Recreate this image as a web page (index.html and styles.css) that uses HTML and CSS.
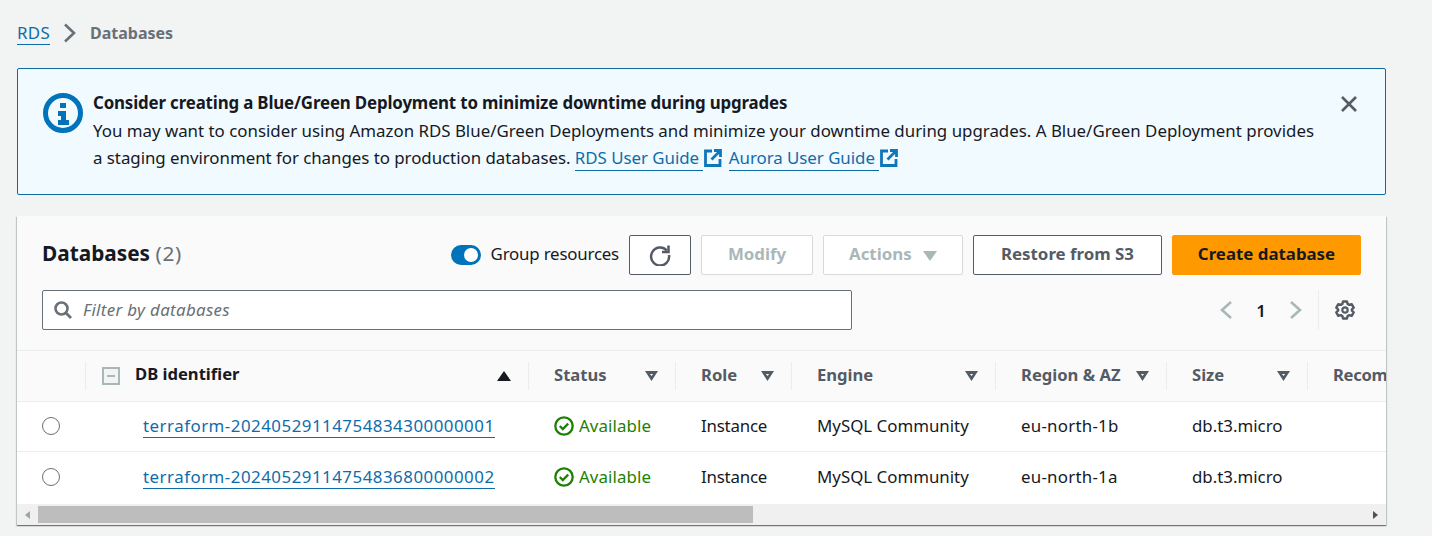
FILE: index.html
```html
<!DOCTYPE html>
<html lang="en">
<head>
<meta charset="UTF-8" />
<title>Databases</title>
<link rel="stylesheet" href="styles.css">
</head>
<body>

  <nav class="breadcrumb">
    <a href="#" class="crumb-link">RDS</a>
    <svg class="crumb-sep" width="16" height="20" viewBox="0 0 16 20"><path d="M3 1.500l9 8.500-9 8.500" fill="none" stroke="#687078" stroke-width="2.600"/></svg>
    <span class="crumb-current">Databases</span>
  </nav>

  <div class="alert">
    <svg class="alert-icon" width="40" height="40" viewBox="0 0 40 40">
      <circle cx="20" cy="20" r="17.500" fill="none" stroke="#0073bb" stroke-width="5"/>
      <path d="M17 10h6v5h-6zM15 18h8v9h3v5H15v-5h3v-4h-3z" fill="#0073bb"/>
    </svg>
    <div class="alert-body">
      <div class="alert-title">Consider creating a Blue/Green Deployment to minimize downtime during upgrades</div>
      <div>You may want to consider using Amazon RDS Blue/Green Deployments and minimize your downtime during upgrades. A Blue/Green Deployment provides</div>
      <div class="alert-links">a staging environment for changes to production databases. <a href="#" class="ext-link">RDS User Guide&nbsp;</a><svg class="ext-icon" width="18" height="18" viewBox="0 0 18 18"><path d="M8 2H1.500v14.500H16V10" fill="none" stroke="#0f76bb" stroke-width="2.800"/><path d="M10 1.500h6.500V8M16 2L7.500 10.500" fill="none" stroke="#0f76bb" stroke-width="2.800"/></svg> <a href="#" class="ext-link">Aurora User Guide&nbsp;</a><svg class="ext-icon" width="18" height="18" viewBox="0 0 18 18"><path d="M8 2H1.500v14.500H16V10" fill="none" stroke="#0f76bb" stroke-width="2.800"/><path d="M10 1.500h6.500V8M16 2L7.500 10.500" fill="none" stroke="#0f76bb" stroke-width="2.800"/></svg></div>
    </div>
    <svg class="alert-close" width="18" height="18" viewBox="0 0 18 18"><path d="M2 2l14 14M16 2L2 16" fill="none" stroke="#545b64" stroke-width="2.600"/></svg>
  </div>

  <section class="panel">
    <div class="panel-head">
      <div class="toolbar">
        <h1 class="panel-title">Databases <span class="count">(2)</span></h1>
        <div class="toggle"><span class="knob"></span></div>
        <span class="toggle-label">Group resources</span>
        <button class="btn btn-refresh">
          <svg width="22" height="22" viewBox="0 0 22 22"><path d="M17.800 6.500A9 9 0 1 0 20 11" fill="none" stroke="#545b64" stroke-width="2.500"/><path d="M19.500 1.500v6.500h-6.500" fill="none" stroke="#545b64" stroke-width="2.500"/></svg>
        </button>
        <button class="btn btn-disabled btn-modify">Modify</button>
        <button class="btn btn-disabled btn-actions">Actions <span class="caret-down"></span></button>
        <button class="btn btn-restore">Restore from S3</button>
        <button class="btn btn-primary">Create database</button>
      </div>
      <div class="filter-row">
        <div class="filter">
          <svg width="18" height="18" viewBox="0 0 18 18"><circle cx="7.500" cy="7.500" r="6" fill="none" stroke="#687078" stroke-width="2.600"/><path d="M11.800 11.800L17 17" stroke="#687078" stroke-width="2.800"/></svg>
          <span class="filter-text">Filter by databases</span>
        </div>
        <div class="pager">
          <svg width="14" height="20" viewBox="0 0 14 20"><path d="M12 2L3 10l9 8" fill="none" stroke="#aab7b8" stroke-width="2.600"/></svg>
          <span class="page-num">1</span>
          <svg width="14" height="20" viewBox="0 0 14 20"><path d="M2 2l9 8-9 8" fill="none" stroke="#aab7b8" stroke-width="2.600"/></svg>
        </div>
        <div class="settings">
          <svg width="20" height="20" viewBox="0 0 20 20"><path d="M8 1.500h4l.6 2.400 1.700 1 2.400-.7 2 3.400-1.800 1.700v1.400l1.800 1.700-2 3.400-2.400-.7-1.700 1-.6 2.400H8l-.6-2.400-1.700-1-2.400.7-2-3.400 1.800-1.700V9.300L1.300 7.600l2-3.400 2.400.7 1.700-1z" fill="none" stroke="#545b64" stroke-width="2.400" stroke-linejoin="round"/><circle cx="10" cy="10" r="2.700" fill="none" stroke="#545b64" stroke-width="2.200"/></svg>
        </div>
      </div>
    </div>

    <div class="table-wrap">
      <table class="db-table">
        <colgroup>
          <col class="c-radio"><col class="c-id"><col class="c-status"><col class="c-role"><col class="c-engine"><col class="c-region"><col class="c-size"><col class="c-rec">
        </colgroup>
        <thead>
          <tr>
            <th></th>
            <th class="th-id">
              <div class="th-inner th-active">
                <span class="expand-box"><span></span></span>
                <span class="th-name">DB identifier</span>
                <span class="sort-up"></span>
              </div>
            </th>
            <th><div class="th-inner"><span class="th-name">Status</span><span class="sort-down"></span></div></th>
            <th><div class="th-inner"><span class="th-name">Role</span><span class="sort-down"></span></div></th>
            <th><div class="th-inner"><span class="th-name">Engine</span><span class="sort-down"></span></div></th>
            <th><div class="th-inner"><span class="th-name">Region &amp; AZ</span><span class="sort-down"></span></div></th>
            <th><div class="th-inner"><span class="th-name">Size</span><span class="sort-down"></span></div></th>
            <th><div class="th-inner"><span class="th-name th-last">Recom</span></div></th>
          </tr>
        </thead>
        <tbody>
          <tr>
            <td class="td-radio"><span class="radio"></span></td>
            <td class="td-id"><a href="#" class="db-link">terraform-20240529114754834300000001</a></td>
            <td><span class="status"><svg width="20" height="20" viewBox="0 0 20 20"><circle cx="10" cy="10" r="8.700" fill="none" stroke="#1d8102" stroke-width="2.300"/><path d="M5.800 10l3 3 5.400-5.400" fill="none" stroke="#1d8102" stroke-width="2.300"/></svg>Available</span></td>
            <td class="td-role">Instance</td>
            <td>MySQL Community</td>
            <td class="td-region">eu-north-1b</td>
            <td>db.t3.micro</td>
            <td></td>
          </tr>
          <tr>
            <td class="td-radio"><span class="radio"></span></td>
            <td class="td-id"><a href="#" class="db-link">terraform-20240529114754836800000002</a></td>
            <td><span class="status"><svg width="20" height="20" viewBox="0 0 20 20"><circle cx="10" cy="10" r="8.700" fill="none" stroke="#1d8102" stroke-width="2.300"/><path d="M5.800 10l3 3 5.400-5.400" fill="none" stroke="#1d8102" stroke-width="2.300"/></svg>Available</span></td>
            <td class="td-role">Instance</td>
            <td>MySQL Community</td>
            <td class="td-region">eu-north-1a</td>
            <td>db.t3.micro</td>
            <td></td>
          </tr>
        </tbody>
      </table>
    </div>

    <div class="scrollbar">
      <span class="arrow-left"></span>
      <span class="thumb"></span>
      <span class="arrow-right"></span>
    </div>
  </section>

</body>
</html>
```

FILE: styles.css
```css
html, body {
  margin: 0;
  padding: 0;
  height: 100%;
  overflow: hidden;
  background: #f2f3f3;
  font-family: 'Noto Sans', 'Open Sans', sans-serif;
  font-size: 16.88px;
  color: #16191f;
}

a {
  color: #0f6cab;
  text-decoration: none;
  border-bottom: 1px solid #0f6cab;
}

.breadcrumb {
  display: flex;
  align-items: center;
  height: 24px;
  margin: 21px 0 23px 17px;
}

.crumb-link {
  letter-spacing: 0.3px;
}

.crumb-sep {
  margin: 0 12px 0 12px;
}

.crumb-current {
  font-size: 16px;
  font-weight: 700;
  color: #687078;
}

.alert {
  display: flex;
  align-items: flex-start;
  box-sizing: border-box;
  width: 1369px;
  height: 127px;
  margin-left: 17px;
  padding: 24px 27px 0 25px;
  background: #f1faff;
  border: 1px solid #0f6a9e;
  border-radius: 2px;
  line-height: 27px;
}

.alert-icon {
  flex: none;
  margin-right: 10px;
}

.alert-body {
  flex: 1;
  margin-top: -4px;
}

.alert-title {
  font-weight: 700;
  letter-spacing: -0.15px;
  margin-bottom: 1px;
}

.alert-links {
  letter-spacing: -0.03px;
}

.alert-close {
  flex: none;
  margin-top: 2px;
}

.ext-link {
  padding-bottom: 1px;
}

.ext-icon {
  vertical-align: -3px;
  margin: 0 2px 0 1px;
}

.panel {
  box-sizing: border-box;
  width: 1369px;
  height: 309px;
  margin: 21px 0 0 17px;
  background: #fff;
  box-shadow: 0 1px 1px 0 rgba(0,28,36,0.4), 1px 1px 1px 0 rgba(0,28,36,0.15), -1px 1px 1px 0 rgba(0,28,36,0.15);
  overflow: hidden;
}

.panel-head {
  box-sizing: border-box;
  height: 135px;
  padding: 19px 25px 0 25px;
  background: #fafafa;
  border-bottom: 1px solid #eaeded;
}

.toolbar {
  display: flex;
  align-items: center;
  height: 40px;
}

.panel-title {
  flex: 1;
  margin: -4px 0 0 0;
  font-size: 20.8px;
  font-weight: 700;
}

.count {
  font-weight: 400;
  color: #687078;
  letter-spacing: 0.7px;
}

.toggle {
  position: relative;
  width: 30px;
  height: 20px;
  margin-right: 10px;
  background: #0073bb;
  border-radius: 10px;
}

.knob {
  position: absolute;
  top: 3px;
  right: 3px;
  width: 14px;
  height: 14px;
  background: #fff;
  border-radius: 50%;
}

.toggle-label {
  margin: -3px 10px 0 0;
  letter-spacing: -0.2px;
}

.btn {
  box-sizing: border-box;
  height: 40px;
  margin-left: 10px;
  padding: 0 0 3px 0;
  font-family: inherit;
  font-size: 16.85px;
  font-weight: 700;
  border-radius: 2px;
  background: #fff;
  color: #545b64;
  border: 1px solid #545b64;
}

.toolbar .btn-refresh {
  width: 62px;
  margin-left: 0;
  padding: 0;
  display: flex;
  align-items: center;
  justify-content: center;
}

.btn-disabled {
  background: #fff;
  color: #aab7b8;
  border-color: #d5dbdb;
}

.btn-modify {
  width: 112px;
}

.btn-actions {
  width: 140px;
}

.caret-down {
  display: inline-block;
  margin-left: 7px;
  border-left: 7px solid transparent;
  border-right: 7px solid transparent;
  border-top: 10px solid #aab7b8;
  vertical-align: -1px;
}

.btn-restore {
  width: 189px;
}

.btn-primary {
  width: 189px;
  background: #ff9900;
  border-color: #ff9900;
  color: #16191f;
}

.filter-row {
  display: flex;
  align-items: center;
  height: 40px;
  margin-top: 15px;
}

.filter {
  box-sizing: border-box;
  display: flex;
  align-items: center;
  gap: 11px;
  width: 810px;
  height: 40px;
  padding-left: 11px;
  background: #fff;
  border: 1px solid #687078;
  border-radius: 2px;
}

.filter-text {
  margin-top: -2px;
  font-style: italic;
  color: #687078;
  letter-spacing: 0.35px;
}

.pager {
  display: flex;
  align-items: center;
  margin-left: auto;
}

.page-num {
  width: 56px;
  text-align: center;
  font-weight: 600;
}

.settings {
  display: flex;
  align-items: center;
  height: 40px;
  margin: 0 6px 0 15px;
  padding-left: 16px;
  border-left: 1px solid #eaeded;
}

.table-wrap {
  height: 153px;
  overflow: hidden;
}

.db-table {
  table-layout: fixed;
  width: 1477px;
  border-collapse: collapse;
}

.c-radio { width: 68px; }
.c-id { width: 443px; }
.c-status { width: 147px; }
.c-role { width: 116px; }
.c-engine { width: 204px; }
.c-region { width: 171px; }
.c-size { width: 141px; }
.c-rec { width: 187px; }

th {
  height: 50px;
  padding: 0;
  background: #fafafa;
  border-bottom: 1px solid #eaeded;
  text-align: left;
}

.th-inner {
  display: flex;
  align-items: center;
  box-sizing: border-box;
  height: 28px;
  padding: 0 17px 0 25px;
  border-left: 1px solid #eaeded;
  justify-content: space-between;
}

.th-name {
  margin-top: -4px;
  font-size: 16.6px;
  font-weight: 700;
  color: #545b64;
  white-space: nowrap;
}

.th-last {
  letter-spacing: -0.3px;
}

.th-active .th-name {
  color: #16191f;
  flex: 1;
  margin-top: -6px;
}

.th-active {
  padding-left: 16px;
}

.expand-box {
  box-sizing: border-box;
  display: flex;
  align-items: center;
  justify-content: center;
  width: 18px;
  height: 18px;
  margin-right: 15px;
  border: 2px solid #aab7b8;
  background: #f2f3f3;
}

.expand-box span {
  width: 8px;
  height: 2px;
  background: #aab7b8;
}

.sort-up {
  border-left: 7px solid transparent;
  border-right: 7px solid transparent;
  border-bottom: 10px solid #16191f;
}

.sort-down {
  box-sizing: border-box;
  width: 13px;
  height: 10px;
  clip-path: polygon(0 0, 100% 0, 50% 100%);
  background: #545b64;
  position: relative;
}

.sort-down::after {
  content: "";
  position: absolute;
  left: 4.5px;
  top: 2.5px;
  width: 4px;
  height: 2.5px;
  clip-path: polygon(0 0, 100% 0, 50% 100%);
  background: #fafafa;
}

td {
  height: 50px;
  padding: 0 0 2px 26px;
  box-sizing: border-box;
  background: #fff;
  border-bottom: 1px solid #eaeded;
  white-space: nowrap;
}

tbody tr:last-child td {
  border-bottom: none;
  height: 52px;
}

.td-radio {
  padding-left: 25px;
}

.td-role {
  letter-spacing: -0.2px;
}

.td-region {
  letter-spacing: 0.25px;
}

.radio {
  display: block;
  box-sizing: border-box;
  width: 18px;
  height: 18px;
  border: 1.5px solid #687078;
  border-radius: 50%;
}

.td-id {
  padding-left: 58px;
}

.db-link {
  letter-spacing: 0.5px;
}

.status {
  display: flex;
  align-items: center;
  gap: 5px;
  color: #1d8102;
  letter-spacing: 0.1px;
}

.scrollbar {
  display: flex;
  align-items: center;
  height: 21px;
  background: #f0f0f0;
}

.arrow-left {
  width: 0;
  margin: 0 8px 0 8px;
  border-top: 4px solid transparent;
  border-bottom: 4px solid transparent;
  border-right: 5px solid #a3a3a3;
}

.thumb {
  width: 715px;
  height: 17px;
  background: #bdbdbd;
}

.arrow-right {
  margin-left: auto;
  margin-right: 8px;
  border-top: 4px solid transparent;
  border-bottom: 4px solid transparent;
  border-left: 5px solid #505050;
}
```
